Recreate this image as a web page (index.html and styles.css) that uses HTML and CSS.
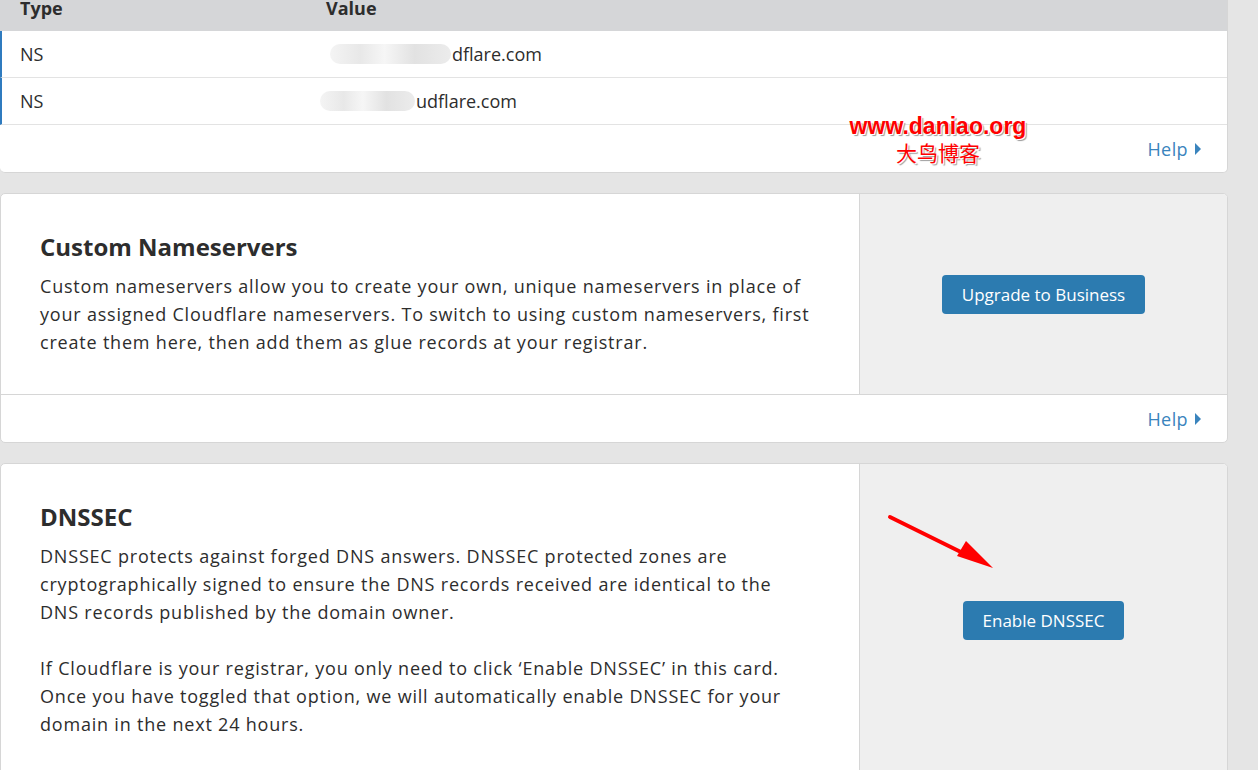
FILE: index.html
```html
<!DOCTYPE html>
<html lang="en">
<head>
<meta charset="utf-8">
<title>DNS</title>
<link rel="stylesheet" href="styles.css">
</head>
<body>
<div class="page">
  <section class="card records">
    <div class="table-head">
      <span class="col-type">Type</span>
      <span class="col-value">Value</span>
    </div>
    <div class="row">
      <span class="col-type">NS</span>
      <span class="col-value"><span class="redact redact-a"></span>dflare.com</span>
    </div>
    <div class="row">
      <span class="col-type">NS</span>
      <span class="col-value"><span class="redact redact-b"></span>udflare.com</span>
    </div>
    <div class="card-foot">
      <a class="help" href="#">Help <svg class="caret" width="6" height="12" viewBox="0 0 6 12"><path d="M0 0 L6 6 L0 12 Z" fill="currentColor"/></svg></a>
    </div>
  </section>

  <section class="card split">
    <div class="split-body">
      <div class="split-main">
        <h2>Custom Nameservers</h2>
        <p>Custom nameservers allow you to create your own, unique nameservers in place of your assigned Cloudflare nameservers. To switch to using custom nameservers, first create them here, then add them as glue records at your registrar.</p>
      </div>
      <div class="split-side">
        <button class="btn">Upgrade to Business</button>
      </div>
    </div>
    <div class="card-foot">
      <a class="help" href="#">Help <svg class="caret" width="6" height="12" viewBox="0 0 6 12"><path d="M0 0 L6 6 L0 12 Z" fill="currentColor"/></svg></a>
    </div>
  </section>

  <section class="card split">
    <div class="split-body">
      <div class="split-main">
        <h2>DNSSEC</h2>
        <p>DNSSEC protects against forged DNS answers. DNSSEC protected zones are cryptographically signed to ensure the DNS records received are identical to the DNS records published by the domain owner.</p>
        <p>If Cloudflare is your registrar, you only need to click ‘Enable DNSSEC’ in this card. Once you have toggled that option, we will automatically enable DNSSEC for your domain in the next 24 hours.</p>
      </div>
      <div class="split-side">
        <button class="btn">Enable DNSSEC</button>
      </div>
    </div>
  </section>

  <div class="watermark">
    <div class="wm-url">www.daniao.org</div>
    <div class="wm-name">大鸟博客</div>
  </div>

  <svg class="arrow" width="120" height="70" viewBox="0 0 120 70">
    <line x1="11" y1="7" x2="98" y2="50" stroke="#ff0000" stroke-width="4" stroke-linecap="round"/>
    <path d="M78 46 L87 31 L114 58 Z" fill="#ff0000"/>
  </svg>
</div>
</body>
</html>
```

FILE: styles.css
```css
* { box-sizing: border-box; }

html, body {
  margin: 0;
  padding: 0;
  background: #e5e5e5;
  height: 770px;
  overflow: hidden;
}

body {
  font-family: "Open Sans", "Noto Sans", sans-serif;
  color: #333333;
  font-size: 18px;
}

.page {
  position: relative;
  width: 1228px;
  margin-top: -18px;
  display: flex;
  flex-direction: column;
  gap: 20px;
}

.card {
  background: #ffffff;
  border: 1px solid #d6d6d6;
  border-radius: 5px;
  overflow: hidden;
}

.records {
  border-left: none;
}

.table-head {
  height: 48px;
  background: #d5d6d8;
  display: flex;
  align-items: center;
  font-weight: 700;
  color: #2d2d2d;
  padding-top: 2px;
}

.col-type {
  width: 326px;
  padding-left: 20px;
}

.col-value {
  display: flex;
  align-items: center;
}

.row {
  height: 47px;
  display: flex;
  align-items: center;
  border-bottom: 1px solid #e3e3e3;
  border-left: 2px solid #2f7bbf;
  color: #2d2d2d;
}

.row .col-type { width: 324px; padding-left: 18px; }

.row:last-of-type {
  border-bottom: 2px solid #dcdcdc;
}

.redact {
  display: inline-block;
  height: 20px;
  border-radius: 10px;
  background: linear-gradient(90deg, #f4f4f4 0%, #e8e8e8 25%, #f6f6f6 45%, #e2e2e2 70%, #ececec 100%);
  margin-right: 1px;
}

.redact-a { width: 121px; margin-left: 4px; }
.redact-b { width: 95px; margin-left: -6px; }

.card-foot {
  height: 47px;
  display: flex;
  align-items: center;
  justify-content: flex-end;
  padding-right: 26px;
}

.help {
  color: #3a84bd;
  text-decoration: none;
  display: flex;
  align-items: center;
  gap: 7px;
  letter-spacing: 0.4px;
}

.caret { display: block; }

.split-body {
  display: flex;
  border-bottom: 1px solid #d6d6d6;
}

.split-main {
  width: 859px;
  padding: 37px 48px 38px 39px;
  border-right: 1px solid #d6d6d6;
}

.split-main h2 {
  margin: 0 0 9px;
  font-size: 24px;
  line-height: 32px;
  font-weight: 700;
  color: #2d2d2d;
}

.split-main p {
  margin: 0;
  line-height: 28px;
  color: #2d2d2d;
  letter-spacing: 0.8px;
}

.split-main p + p { margin-top: 28px; }

.split-side {
  flex: 1;
  background: #efefef;
  display: flex;
  align-items: center;
  justify-content: center;
}

.btn {
  font-family: inherit;
  font-size: 17px;
  color: #ffffff;
  background: #2c7bb0;
  border: none;
  border-radius: 4px;
  height: 39px;
  padding: 0 20px;
}

.watermark {
  position: absolute;
  left: 840px;
  top: 132px;
  width: 196px;
  text-align: center;
  color: #ff0000;
  text-shadow: 1px 1px 0 #ffffff, 2px 2px 1px #9a9a9a;
  display: flex;
  flex-direction: column;
  gap: 1px;
}

.wm-url {
  font-family: "Liberation Sans", Arial, sans-serif;
  font-weight: 700;
  font-size: 23px;
  line-height: 25px;
}

.wm-name {
  font-family: "Noto Sans CJK SC", sans-serif;
  font-size: 21px;
  line-height: 25px;
}

.arrow {
  position: absolute;
  left: 879px;
  top: 528px;
}
```
